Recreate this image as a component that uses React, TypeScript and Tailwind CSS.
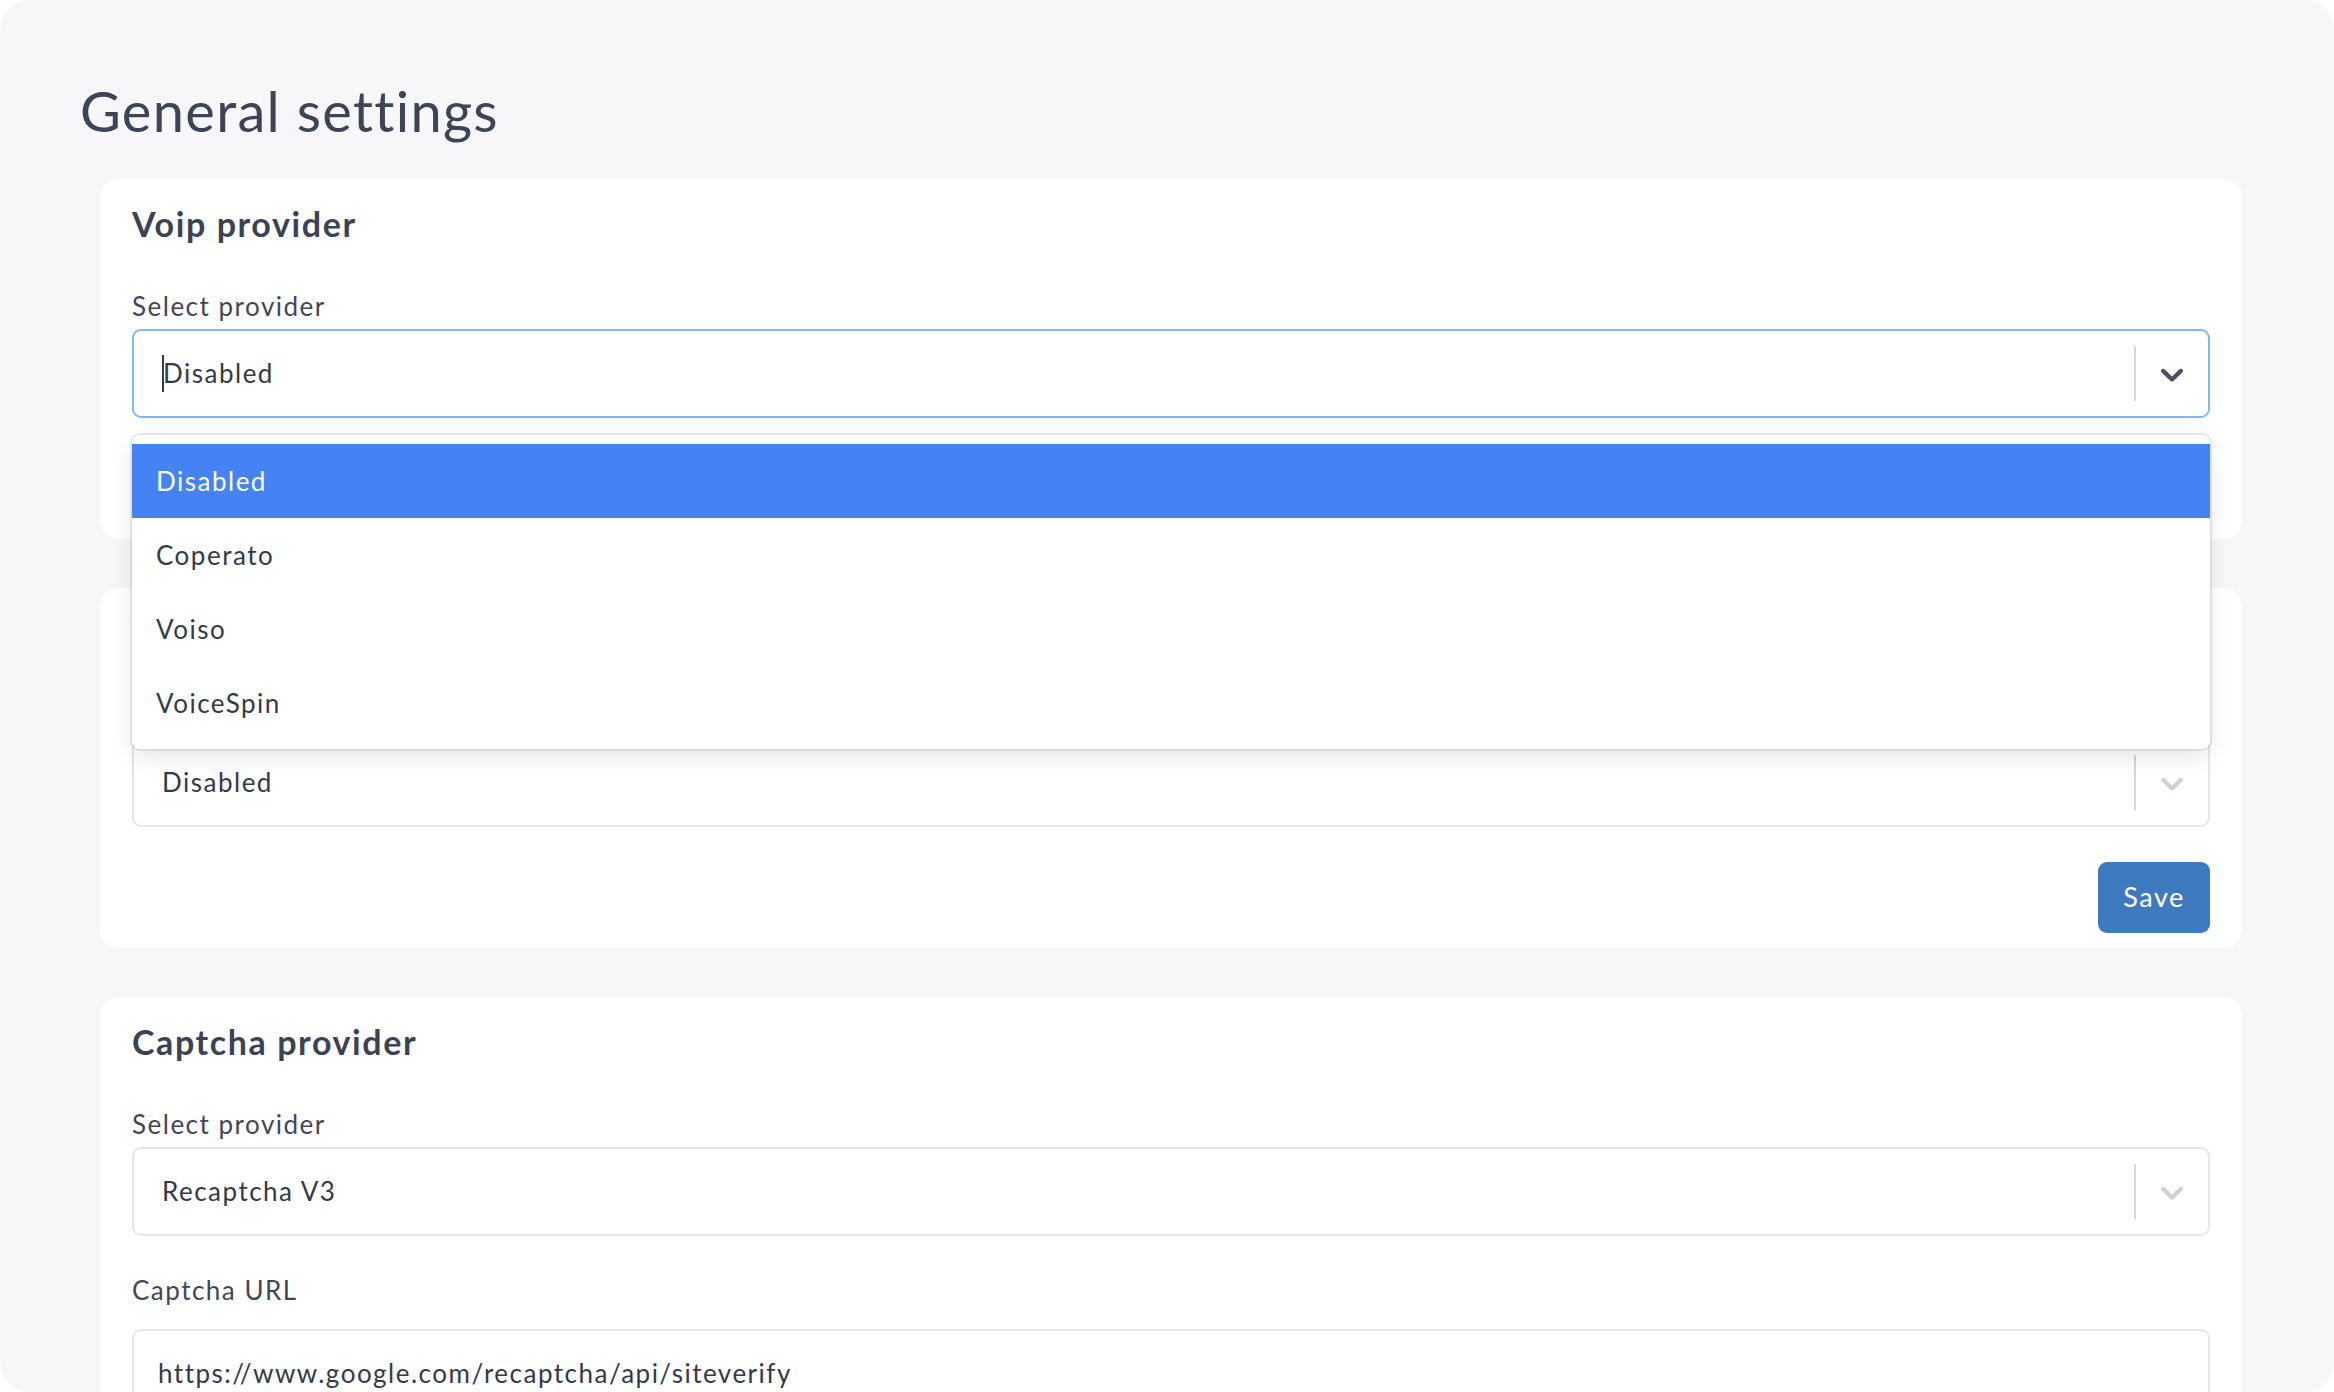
import React from 'react';

const FONT = { fontFamily: 'Lato, "Noto Sans", sans-serif' };

const Chevron: React.FC<{ dark?: boolean }> = ({ dark }) => (
  <svg viewBox="0 0 20 20" width={38} height={38} className={dark ? 'text-[#4a5263]' : 'text-[#cfd1d6]'} fill="currentColor">
    <path d="M4.516 7.548c0.436-0.446 1.043-0.481 1.576 0l3.908 3.747 3.908-3.747c0.533-0.481 1.141-0.446 1.574 0 0.436 0.445 0.408 1.197 0 1.615-0.406 0.418-4.695 4.502-4.695 4.502-0.217 0.223-0.502 0.335-0.787 0.335s-0.57-0.112-0.789-0.335c0 0-4.287-4.084-4.695-4.502s-0.436-1.17 0-1.615z" />
  </svg>
);

interface SelectBoxProps {
  value: string;
  focused?: boolean;
  children?: React.ReactNode;
}

const SelectBox: React.FC<SelectBoxProps> = ({ value, focused, children }) => (
  <div className="relative mt-[7px]">
    <div
      className={`flex h-[89px] items-center rounded-[9px] bg-white border-2 ${
        focused ? 'border-[#80b8ef]' : 'border-[#e6e7ea]'
      }`}
    >
      <div className="flex flex-1 items-center pl-[28px] text-[26px] tracking-[1.5px] text-[#333a48]">
        {focused && <span className="inline-block w-[2px] h-[37px] bg-[#333a48] -mr-[1px]" />}
        <span>{value}</span>
      </div>
      <div className="w-[2px] h-[55px] bg-[#d6d6d8]" />
      <div className="flex w-[72px] items-center justify-center">
        <Chevron dark={focused} />
      </div>
    </div>
    {children}
  </div>
);

const options = ['Disabled', 'Coperato', 'Voiso', 'VoiceSpin'];

const Menu: React.FC = () => (
  <div className="absolute left-0 right-0 top-[106px] z-20 rounded-[8px] bg-white py-[9px] shadow-[0_0_0_2px_rgba(0,0,0,0.08),0_8px_22px_rgba(0,0,0,0.1)]">
    {options.map((opt, i) => (
      <div
        key={opt}
        className={`flex h-[74px] items-center pl-[24px] text-[26px] tracking-[1.5px] ${
          i === 0 ? 'bg-[#4583f5] text-white' : 'text-[#333a48]'
        }`}
      >
        {opt}
      </div>
    ))}
  </div>
);

const SaveRow: React.FC = () => (
  <div className="mt-[35px] flex justify-end">
    <button className="h-[71px] w-[112px] rounded-[9px] bg-[#3d7bbe] text-[27px] tracking-[1.5px] text-white">Save</button>
  </div>
);

const Card: React.FC<{ title: string; children: React.ReactNode; z?: boolean }> = ({ title, children, z }) => (
  <div className={`relative rounded-[18px] bg-white px-8 pt-[24px] pb-[15px] ${z ? 'z-10' : ''}`}>
    <h2 className="text-[34px] leading-[41px] font-bold tracking-[1.6px] text-[#3a4356]">{title}</h2>
    {children}
  </div>
);

const Label: React.FC<{ text: string; className?: string }> = ({ text, className }) => (
  <div className={`text-[26px] leading-[31px] tracking-[1.5px] text-[#3f4758] ${className || ''}`}>{text}</div>
);

export default function App() {
  return (
    <div className="w-full h-[1392px] bg-white overflow-hidden" style={FONT}>
      <div className="h-full rounded-[30px] bg-[#f7f7f9] overflow-hidden pt-[77px]">
        <h1 className="pl-[80px] text-[56px] leading-[67px] tracking-[1.3px] text-[#3c4558]">General settings</h1>

        <div className="ml-[100px] mr-[92px] mt-[35px] flex flex-col gap-[49px]">
          <Card title="Voip provider" z>
            <Label text="Select provider" className="mt-[47px]" />
            <SelectBox value="Disabled" focused>
              <Menu />
            </SelectBox>
            <SaveRow />
          </Card>

          <Card title="Voip provider">
            <Label text="Select provider" className="mt-[47px]" />
            <SelectBox value="Disabled" />
            <SaveRow />
          </Card>

          <Card title="Captcha provider">
            <Label text="Select provider" className="mt-[47px]" />
            <SelectBox value="Recaptcha V3" />
            <Label text="Captcha URL" className="mt-[39px]" />
            <div className="mt-[23px] flex h-[89px] items-center rounded-[9px] border-2 border-[#e6e7ea] bg-white pl-[24px] text-[26px] tracking-[1.5px] text-[#333a48]">
              https://www.google.com/recaptcha/api/siteverify
            </div>
          </Card>
        </div>
      </div>
    </div>
  );
}
